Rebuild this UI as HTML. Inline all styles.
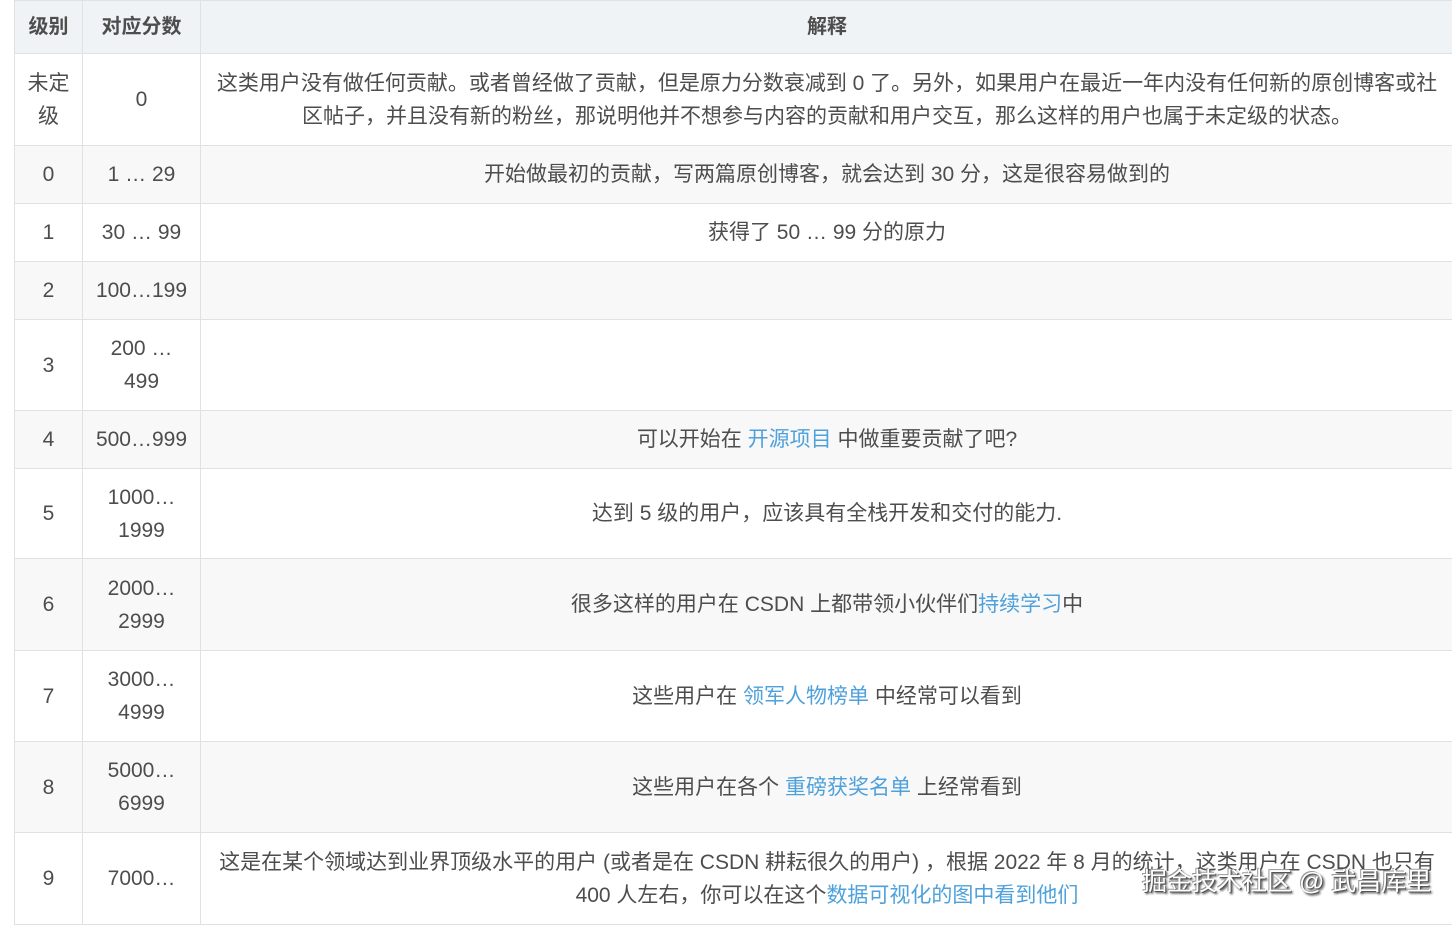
<!DOCTYPE html>
<html><head><meta charset="utf-8"><style>
body{margin:0;background:#fff;width:1452px;height:919px;overflow:hidden;font-family:"Liberation Sans","Noto Sans CJK SC",sans-serif;color:#4d4d4d;position:relative}
table{position:absolute;left:14px;top:0;border-collapse:collapse;width:1440px;font-size:21px;line-height:33px;table-layout:fixed}
td,th{border:1px solid #dfe2e5;text-align:center;padding:0 10px;vertical-align:middle;white-space:nowrap}
td:nth-child(3){padding:0 8px}
th{background:#eff3f5;font-weight:bold;color:#4d4d4d;height:52px;font-size:20px}
tr.g td{background:#f8f8f8}
a{color:#4ea1db;text-decoration:none}
.wm{position:absolute;left:1142px;top:862px;font-size:25px;color:#fff;text-shadow:1px 1px 0 #555,-1px -1px 0 #999,2px 2px 2px #333;font-family:"Liberation Sans","Noto Sans CJK SC",sans-serif}
</style></head><body>
<table>
<colgroup><col style="width:68px"><col style="width:118px"><col></colgroup>
<tr><th>级别</th><th>对应分数</th><th>解释</th></tr>
<tr style="height:92px"><td>未定<br>级</td><td>0</td><td>这类用户没有做任何贡献。或者曾经做了贡献，但是原力分数衰减到 0 了。另外，如果用户在最近一年内没有任何新的原创博客或社<br>区帖子，并且没有新的粉丝，那说明他并不想参与内容的贡献和用户交互，那么这样的用户也属于未定级的状态。</td></tr>
<tr class="g" style="height:58px"><td>0</td><td>1 … 29</td><td>开始做最初的贡献，写两篇原创博客，就会达到 30 分，这是很容易做到的</td></tr>
<tr style="height:58px"><td>1</td><td>30 … 99</td><td>获得了 50 … 99 分的原力</td></tr>
<tr class="g" style="height:58px"><td>2</td><td>100…199</td><td></td></tr>
<tr style="height:91px"><td>3</td><td>200 …<br>499</td><td></td></tr>
<tr class="g" style="height:58px"><td>4</td><td>500…999</td><td>可以开始在 <a>开源项目</a> 中做重要贡献了吧?</td></tr>
<tr style="height:90px"><td>5</td><td>1000…<br>1999</td><td>达到 5 级的用户，应该具有全栈开发和交付的能力.</td></tr>
<tr class="g" style="height:92px"><td>6</td><td>2000…<br>2999</td><td>很多这样的用户在 CSDN 上都带领小伙伴们<a>持续学习</a>中</td></tr>
<tr style="height:91px"><td>7</td><td>3000…<br>4999</td><td>这些用户在 <a>领军人物榜单</a> 中经常可以看到</td></tr>
<tr class="g" style="height:91px"><td>8</td><td>5000…<br>6999</td><td>这些用户在各个 <a>重磅获奖名单</a> 上经常看到</td></tr>
<tr style="height:92px"><td>9</td><td>7000…</td><td>这是在某个领域达到业界顶级水平的用户 (或者是在 CSDN 耕耘很久的用户) ，根据 2022 年 8 月的统计，这类用户在 CSDN 也只有<br>400 人左右，你可以在这个<a>数据可视化的图中看到他们</a></td></tr>
</table>
<div class="wm">掘金技术社区 @ 武昌库里</div>
</body></html>
